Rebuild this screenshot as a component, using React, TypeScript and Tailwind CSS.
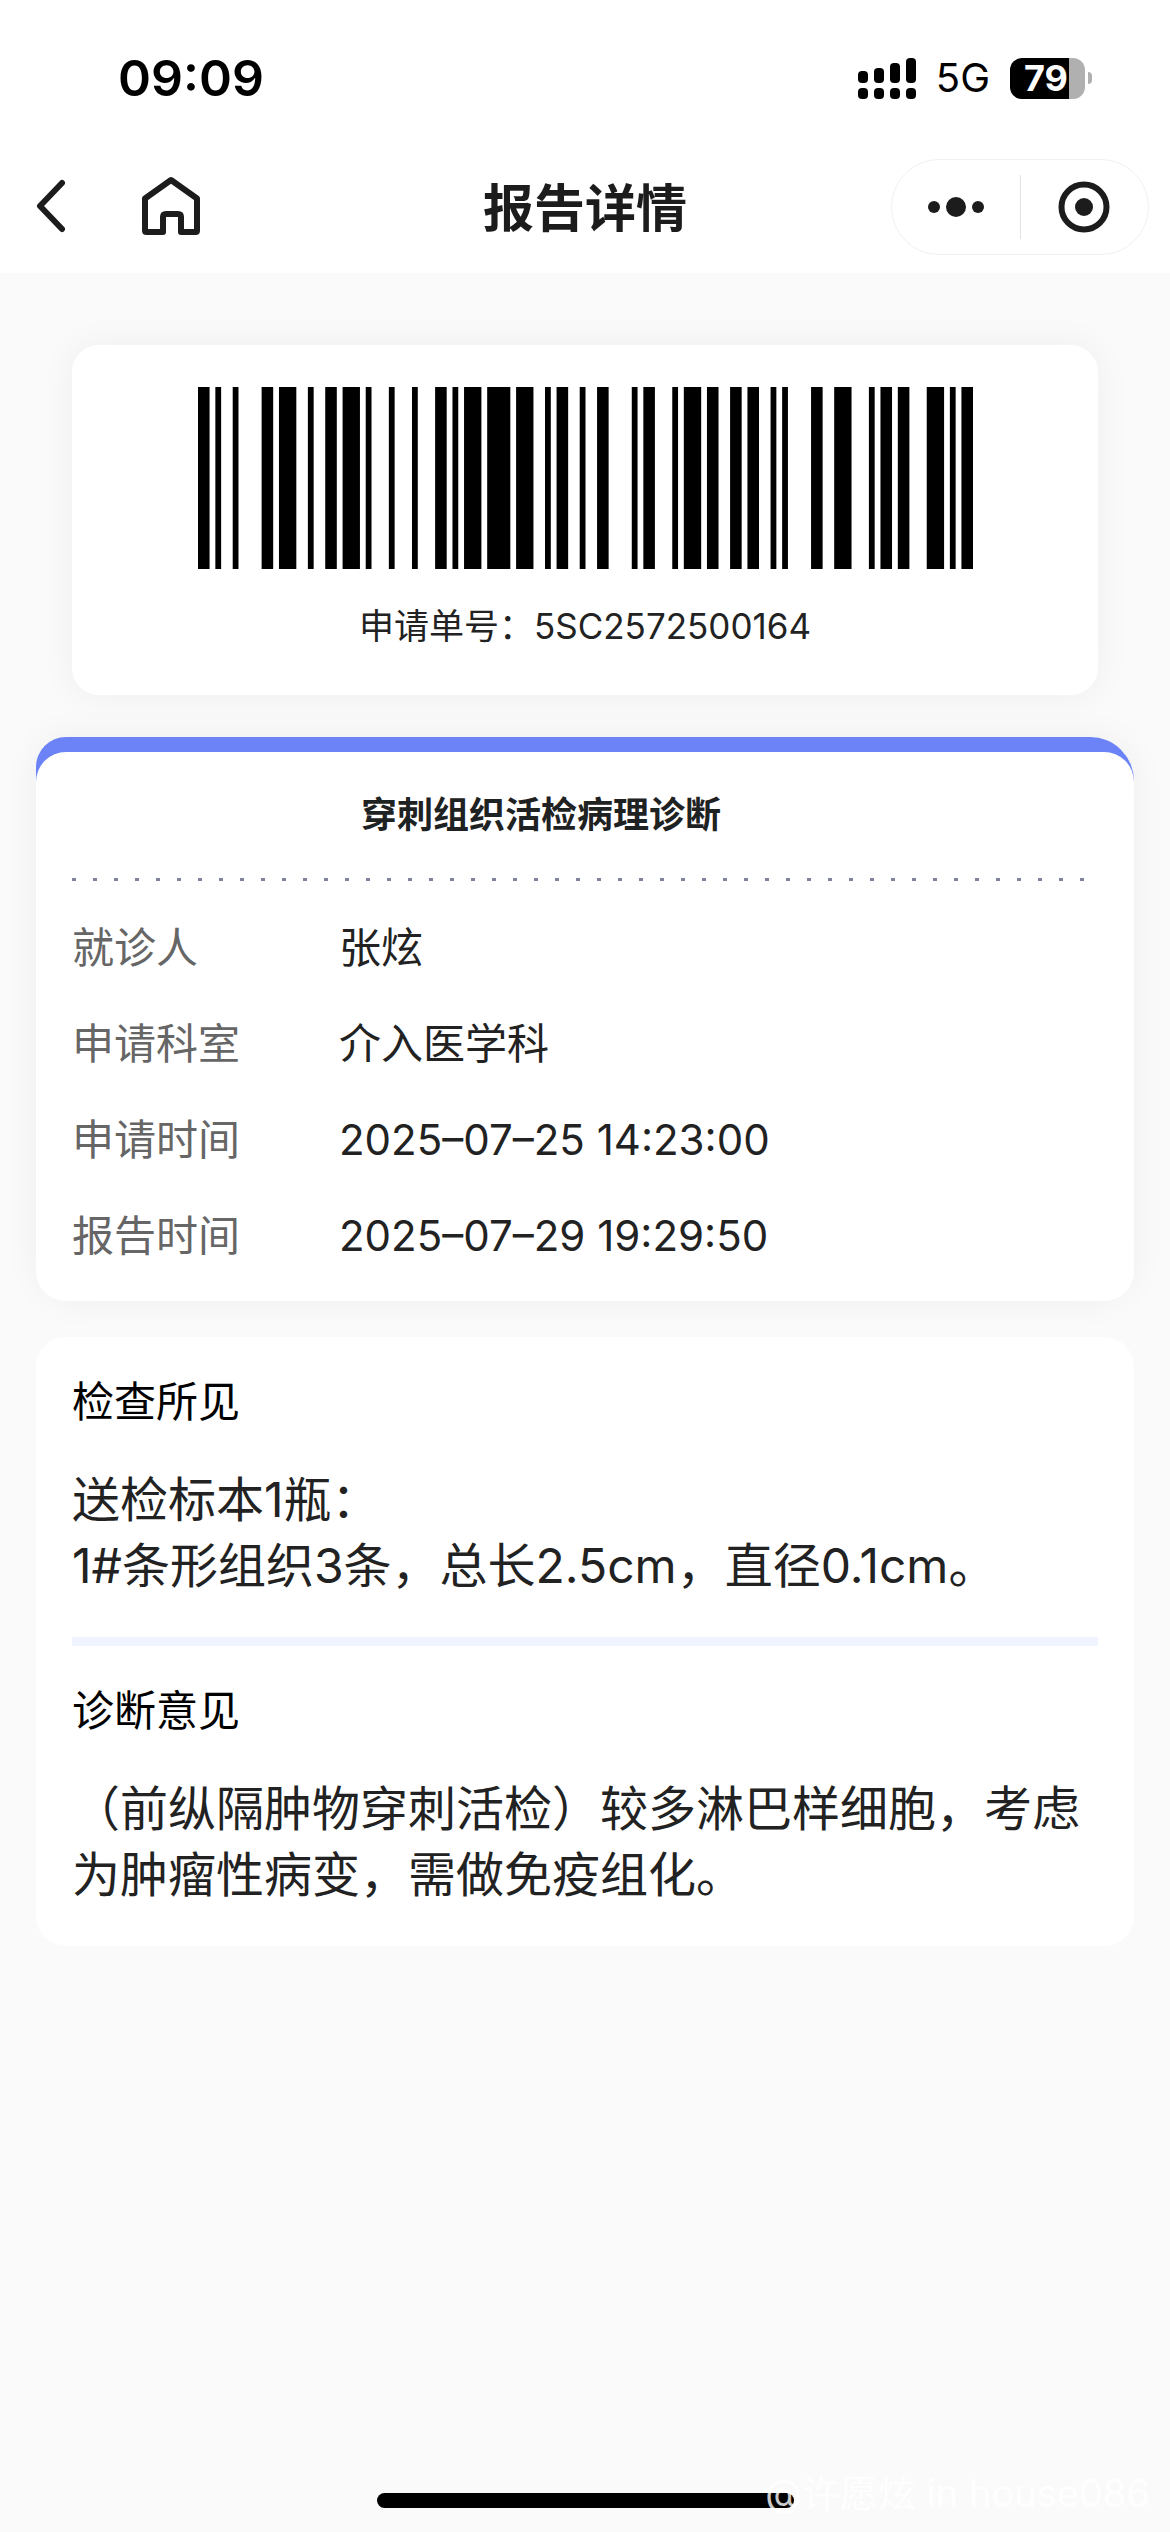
import type { ReactNode } from "react";

// Code 128 symbol widths, alternating bar / space
const BARCODE_WIDTHS = [
  "211214", // start B
  "213212",
  "213113",
  "131321",
  "113141", // switch to code C
  "321122",
  "122411",
  "231131",
  "222122",
  "111422",
  "331121", // checksum
  "2331112", // stop
].join("");

const INFO_ROWS = [
  { label: "就诊人", value: "张炫" },
  { label: "申请科室", value: "介入医学科" },
  { label: "申请时间", value: "2025–07–25 14:23:00" },
  { label: "报告时间", value: "2025–07–29 19:29:50" },
];

const SIGNAL_TOPS = [13, 10, 5, 0];

const StatusBar = () => {
  return (
    <div className="flex h-[156px] items-center justify-between pl-[118px] pr-[78px] text-black">
      <span className="text-[50px] leading-[60px] font-semibold">09:09</span>

      <div className="flex items-center">
        {/* Signal */}
        <svg width="58" height="41" viewBox="0 0 58 41" role="img" aria-label="信号">
          {SIGNAL_TOPS.map((top, i) => (
            <g key={top}>
              <rect x={i * 16} y={top} width="10" height={25 - top} rx="4" />
              <rect x={i * 16} y="30" width="10" height="11" rx="4" />
            </g>
          ))}
        </svg>

        <span className="ml-5 text-[40px] leading-[48px]">5G</span>

        {/* Battery */}
        <div className="ml-5 flex items-center gap-[3px]">
          <div className="flex h-[41px] w-[75px] items-center rounded-[12px] bg-[linear-gradient(90deg,#000_79%,#b0b0b0_79%)] pl-[14px]">
            <span className="text-[36px] leading-[48px] font-bold text-white">79</span>
          </div>
          <div className="h-3 w-1 rounded-r-full bg-[#b0b0b0]" />
        </div>
      </div>
    </div>
  );
};

const NavBar = () => {
  return (
    <header className="grid h-[117px] grid-cols-[1fr_auto_1fr] items-start px-[21px] text-[#1c1c1c]">
      <div className="flex h-[100px] items-center pl-[15px]">
        <button type="button" aria-label="返回">
          <svg width="32" height="56" viewBox="0 0 32 56" fill="none" stroke="currentColor" strokeWidth="6" strokeLinecap="round" strokeLinejoin="round">
            <path d="M26 5 4 28l22 23" />
          </svg>
        </button>
        <button type="button" aria-label="首页" className="ml-[73px]">
          <svg width="60" height="60" viewBox="0 0 60 60" fill="none" stroke="currentColor" strokeWidth="6" strokeLinejoin="round">
            <path d="M30 4 56 22.500V54.500Q56 56 54.500 56H40V41Q40 38 37 38H25Q22 38 22 41V56H5.500Q4 56 4 54.500V22.500Z" />
          </svg>
        </button>
      </div>

      <h1 className="text-[51px] leading-[106px] font-bold">报告详情</h1>

      <div className="mt-[3px] ml-auto flex h-24 w-[258px] items-center rounded-full border border-[#f0f0f0]">
        <button type="button" aria-label="更多" className="flex flex-1 items-center justify-center gap-[6px]">
          <span className="size-3 rounded-full bg-current" />
          <span className="size-5 rounded-full bg-current" />
          <span className="size-3 rounded-full bg-current" />
        </button>
        <div className="h-16 w-px bg-[#e2e2e2]" />
        <button type="button" aria-label="关闭" className="flex flex-1 justify-center">
          <svg width="52" height="52" viewBox="0 0 52 52">
            <circle cx="26" cy="26" r="22.500" fill="none" stroke="currentColor" strokeWidth="6" />
            <circle cx="26" cy="26" r="9" fill="currentColor" />
          </svg>
        </button>
      </div>
    </header>
  );
};

const Barcode = () => {
  let x = 0;
  const bars = BARCODE_WIDTHS.split("").map((char, i) => {
    const bar = { x, width: Number(char), dark: i % 2 === 0 };
    x += bar.width;
    return bar;
  });

  return (
    <svg
      className="h-[182px] w-[775px]"
      viewBox="0 0 134 100"
      preserveAspectRatio="none"
      role="img"
      aria-label="5SC2572500164"
    >
      {bars.filter((bar) => bar.dark).map((bar) => (
        <rect key={bar.x} x={bar.x} y="0" width={bar.width} height="100" />
      ))}
    </svg>
  );
};

const BarcodeCard = () => {
  return (
    <section className="mx-9 flex flex-col items-center rounded-[27px] bg-white px-9 py-[42px] shadow-[0_0_36px_rgba(0,0,0,0.05)]">
      <Barcode />
      <p className="mt-[30px] text-[35px] leading-[54px] text-[#222]">申请单号：5SC2572500164</p>
    </section>
  );
};

const SummaryCard = () => {
  return (
    <section className="mt-[42px] rounded-tl-[30px] rounded-tr-[44px] rounded-b-[44px] bg-[#6b83f7] pt-[15px] shadow-[0_0_36px_rgba(0,0,0,0.05)]">
      <div className="rounded-[30px] bg-white px-9 pt-9 pb-[17px]">
        <h2 className="pr-[88px] text-center text-[36px] leading-[54px] font-bold text-[#1f2222]">
          穿刺组织活检病理诊断
        </h2>
        {/* Dotted rule */}
        <div className="mt-9 h-[3px] bg-[repeating-linear-gradient(90deg,#7f849c_0_4px,transparent_4px_21px)]" />
        <dl className="mt-[19px]">
          {INFO_ROWS.map((row) => (
            <div key={row.label} className="flex text-[42px] leading-[96px]">
              <dt className="w-[267px] shrink-0 text-[#666]">{row.label}</dt>
              <dd className="text-[#222]">{row.value}</dd>
            </div>
          ))}
        </dl>
      </div>
    </section>
  );
};

const ReportBlock = ({ title, children }: { title: string; children: ReactNode }) => {
  return (
    <div className="pt-9 pb-[38px]">
      <h3 className="text-[42px] leading-[58px] text-black">{title}</h3>
      <p className="mt-9 text-[48px] leading-[66px] text-[#222]">{children}</p>
    </div>
  );
};

export default function App() {
  return (
    <div
      lang="zh-CN"
      className="relative flex min-h-screen flex-col bg-[#fafafa] font-['Inter','Noto_Sans_CJK_SC',sans-serif]"
    >
      <div className="bg-white">
        <StatusBar />
        <NavBar />
      </div>

      <main className="flex-1 px-9 pt-[72px]">
        <BarcodeCard />
        <SummaryCard />

        <section className="mt-9 rounded-[30px] bg-white px-9">
          <ReportBlock title="检查所见">
            送检标本1瓶：
            <br />
            1#条形组织3条，总长2.5cm，直径0.1cm。
          </ReportBlock>
          <hr className="border-t-[9px] border-[#f0f4fe]" />
          <ReportBlock title="诊断意见">
            （前纵隔肿物穿刺活检）较多淋巴样细胞，考虑为肿瘤性病变，需做免疫组化。
          </ReportBlock>
        </section>
      </main>

      {/* Home indicator */}
      <div className="flex justify-center pb-6">
        <div className="h-[15px] w-[417px] rounded-full bg-black" />
      </div>

      {/* Watermark */}
      <span className="absolute right-5 bottom-[14px] text-[38px] leading-[50px] text-white/80">
        @许愿炫 in house086
      </span>
    </div>
  );
}
